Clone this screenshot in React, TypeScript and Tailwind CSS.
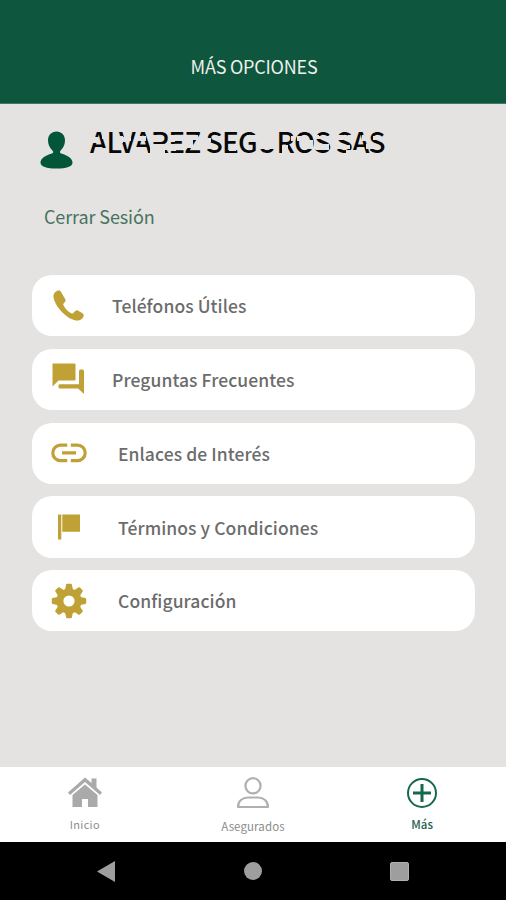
import type { ReactNode } from "react";

const gold = "#bfa136";

function HandsetIcon() {
  return (
    <svg width="31" height="31" viewBox="0 0 31 31" fill={gold}>
      <path d="M5.4.5C3.6.5.7 3 .5 5.6.3 9 2.400 15 8.500 21.600 14.500 28 20.500 30.600 24.300 30.600c2.700 0 6.200-2.400 6.400-5.200 0-1.200-.4-1.700-1.200-2.200l-4.300-2.500c-1.200-.7-2-.6-2.900.2l-2 2c-.8.8-1.700.8-2.700.2-3-1.900-5.300-4.500-7-7.600-.5-1-.4-1.700.4-2.500l1.100-1.200c.6-.7.6-1.500.2-2.500L8.200 2.200C7.500.8 6.800.5 5.400.5Z" />
    </svg>
  );
}

function ForumIcon() {
  return (
    <svg width="33" height="32" viewBox="0 0 33 32" fill={gold}>
      <path d="M1 .5h21.500q1 0 1 1v15q0 1-1 1H6.500L.5 23.500V1Q.5.500 1 .5Z" />
      <path d="M28.500 6.500h2q1.500 0 1.500 1.500v23l-6-5.500H8q-1.500 0-1.500-1.500v-1.500q0-1.200 1.500-1.200H27V8q0-1.500 1.500-1.500Z" />
    </svg>
  );
}

function LinkIcon() {
  return (
    <svg width="36" height="20" viewBox="0 0 36 20" fill="none" stroke={gold} strokeWidth="3.200">
      <path d="M16.200 2.200H9.500a7.600 7.600 0 0 0 0 15.400h6.700M19.800 2.200h6.700a7.600 7.600 0 0 1 0 15.400h-6.700M11 9.900h14" />
    </svg>
  );
}

function FlagIcon() {
  return (
    <svg width="22" height="26" viewBox="0 0 22 26" fill={gold}>
      <path d="M0 .5h3.300V25.500H0zM4.300.5H22v17.300H4.300z" />
    </svg>
  );
}

function GearIcon() {
  return (
    <svg width="36" height="36" viewBox="-18 -18 36 36" fill={gold}>
      {[0, 45, 90, 135, 180, 225, 270, 315].map((angle) => (
        <path key={angle} transform={`rotate(${angle})`} d="M-4.200-10 -2.900-16.400Q-2.600-17.200-1.800-17.200H1.800Q2.600-17.200 2.900-16.400L4.200-10Z" />
      ))}
      <path fillRule="evenodd" d="M0-12.600a12.600 12.600 0 1 0 0 25.200a12.600 12.600 0 1 0 0-25.200ZM0-5.600a5.600 5.600 0 1 1 0 11.200a5.600 5.600 0 1 1 0-11.200Z" />
    </svg>
  );
}

const options: { label: string; icon: ReactNode; pad: string }[] = [
  { label: "Teléfonos Útiles", icon: <HandsetIcon />, pad: "pl-[8px]" },
  { label: "Preguntas Frecuentes", icon: <ForumIcon />, pad: "pl-[8px]" },
  { label: "Enlaces de Interés", icon: <LinkIcon />, pad: "pl-[14px]" },
  { label: "Términos y Condiciones", icon: <FlagIcon />, pad: "pl-[14px]" },
  { label: "Configuración", icon: <GearIcon />, pad: "pl-[14px]" },
];

// Regions of the account name that are obscured: [x, y, width, height].
const redactions: number[][] = [
  [0, 6, 8, 6], [8, 17, 10, 6], [12, 4, 6, 4],
  [26, 5, 7, 7], [37, 0, 4, 10], [28, 6, 9, 5], [43, 16, 13, 8], [47, 5, 9, 5],
  [60, 4, 10, 7], [60, 13, 15, 10], [72, 13, 5, 6],
  [80, 4, 5, 7], [80, 13, 6, 7], [96, 4, 12, 5], [94, 9, 9, 8],
  [115, 7, 6, 4], [124, 5, 7, 4], [115, 13, 10, 5],
  [139, 4, 7, 6], [139, 13, 7, 7],
  [157, 4, 12, 6], [157, 14, 5, 5], [168, 0, 18, 18],
  [192, 14, 6, 10], [201, 5, 4, 5], [207, 5, 6, 5], [213, 9, 10, 9],
  [223, 4, 6, 4], [229, 5, 10, 3], [226, 13, 13, 6],
  [243, 4, 10, 5], [246, 14, 14, 4], [258, 4, 6, 7], [256, 19, 18, 5],
  [272, 4, 6, 6], [283, 5, 8, 4], [276, 13, 10, 5],
];

export default function App() {
  return (
    <div className="flex h-[900px] w-[506px] flex-col overflow-hidden bg-[#e4e3e1] font-['Noto_Sans_CJK_SC','Noto_Sans',sans-serif]">
      <header className="flex h-[104px] shrink-0 items-end justify-center border-b border-[#467764] bg-[#0e563d] pb-[23px] pl-[2px]">
        <h1 className="text-[18px] leading-[28px] font-normal tracking-[-0.220px] text-[#edf1e9]">MÁS OPCIONES</h1>
      </header>

      <main className="flex min-h-0 flex-1 flex-col">
        <section className="flex h-[92px] shrink-0 pt-[27px] pl-[40px]">
          <svg className="shrink-0" width="34" height="38" viewBox="0 0 34 38" fill="#04563b">
            <path d="M16.500.5C21.500.5 25 4 25 9.500c0 4.700-2.200 8-4.500 10.200-1 1-.7 2.100.7 2.700C28 24.300 32.500 27.500 32.500 31.500c0 4-6 6-16 6s-16-2-16-6c0-4 4.600-7.200 11.400-9.100 1.500-.5 1.700-1.700.7-2.700C10.300 17.500 8 14.200 8 9.500 8 4 11.500.5 16.500.5Z" />
          </svg>
          <div className="relative ml-[16px] h-[24px] w-[300px]">
            <p className="text-[28px] leading-[20px] font-medium tracking-[-0.850px] whitespace-nowrap text-[#080808]">ALVAREZ SEGUROS SAS</p>
            <svg className="absolute top-0 left-0" width="300" height="26">
              {redactions.map(([x, y, width, height], i) => (
                <rect key={i} x={x} y={y} width={width} height={height} fill="#e4e3e1" />
              ))}
            </svg>
          </div>
        </section>

        <a className="mt-[6px] ml-[44px] text-[18px] leading-[28px] tracking-[-0.110px] text-[#47735f]">Cerrar Sesión</a>

        <ul className="mt-[45px] flex flex-col gap-[12.500px] pr-[31px] pl-[32px]">
          {options.map(({ label, icon, pad }) => (
            <li key={label} className="flex h-[61.300px] items-center rounded-[20px] bg-white pl-[18px]">
              <span className="flex w-[37px] shrink-0 justify-center">{icon}</span>
              <span className="w-[17px] shrink-0" />
              <span className={`${pad} pt-[1px] text-[17.500px] leading-[28px] font-medium tracking-[0.080px] text-[#6c6c6c]`}>{label}</span>
            </li>
          ))}
        </ul>
      </main>

      <nav className="grid h-[75px] shrink-0 grid-cols-3 bg-white text-[11px] leading-[16px] text-[#8c8c8c]">
        <div className="flex flex-col items-center pt-[10px] pl-[1px]">
          <svg width="36" height="32" viewBox="0 0 36 32" fill="#aaaaaa">
            <path d="M18 .5 24.500 6V1.500h5V10.500l5.500 5-2 2.500L18 5 3 18 1 15.500Z" />
            <path d="M18 7.500 30.500 18v12H21v-8h-6v8H5.500V18Z" />
          </svg>
          <span className="mt-[7px] tracking-[0.3px]">Inicio</span>
        </div>
        <div className="flex flex-col items-center pt-[10px]">
          <svg width="34" height="32" viewBox="0 0 34 32" fill="none" stroke="#b0b0b0" strokeWidth="2.200">
            <circle cx="17" cy="8.800" r="7.600" />
            <path strokeLinejoin="round" d="M2 30c0-6 4.500-9.500 10-9.500h10c5.500 0 10 3.500 10 9.500Z" />
          </svg>
          <span className="mt-[9px] text-[11.500px] tracking-[0.1px]">Asegurados</span>
        </div>
        <div className="flex flex-col items-center pt-[10px] text-[#27634e]">
          <svg width="32" height="32" viewBox="0 0 32 32" fill="none" stroke="#14684c">
            <circle cx="16" cy="16" r="14" strokeWidth="2" />
            <path strokeWidth="3" d="M16 7v18M7 16h18" />
          </svg>
          <span className="mt-[7px] pl-[1px] text-[11.500px] font-medium">Más</span>
        </div>
      </nav>

      <footer className="flex h-[58px] shrink-0 items-center justify-between bg-black pr-[97px] pl-[97px]">
        <svg width="18" height="21" viewBox="0 0 18 21" fill="#9e9e9e"><path d="M18 0v21L0 10.500Z" /></svg>
        <span className="size-[18px] rounded-full bg-[#9e9e9e]" />
        <span className="size-[19px] rounded-[2px] border border-[#b0b0b0] bg-[#9e9e9e]" />
      </footer>
    </div>
  );
}
